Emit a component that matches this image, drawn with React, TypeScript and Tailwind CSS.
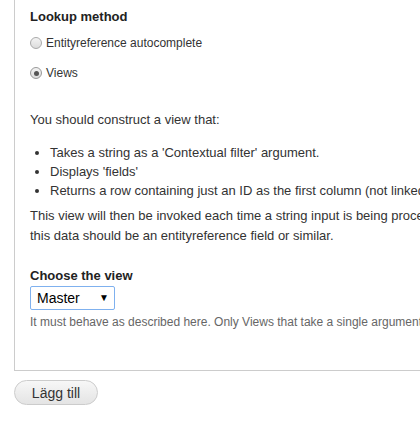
export default function App() {
  return (
    <div className="w-[420px] h-[421px] overflow-hidden bg-white text-[13px] leading-[18px] text-[#333] font-['Liberation_Sans',Arial,sans-serif]">
      <div className="ml-[14px] w-[600px] border-l border-b border-[#ccc] pl-[15px] pt-[8px] pb-[39px]">
        <div className="font-bold text-[#222]">Lookup method</div>
        <div className="mt-[8px] flex items-center gap-[4px] text-[12px]">
          <span className="inline-block w-[12px] h-[12px] rounded-full border border-[#aaa] bg-gradient-to-b from-[#f4f4f4] to-[#dcdcdc]" />
          <span>Entityreference autocomplete</span>
        </div>
        <div className="mt-[12px] flex items-center gap-[4px] text-[12px]">
          <span className="relative inline-flex items-center justify-center w-[12px] h-[12px] rounded-full border border-[#999] bg-gradient-to-b from-[#f4f4f4] to-[#dcdcdc]">
            <span className="w-[5px] h-[5px] rounded-full bg-[#555]" />
          </span>
          <span>Views</span>
        </div>
        <p className="mt-[29px]">You should construct a view that:</p>
        <ul className="mt-[14px] pl-[20px] list-disc leading-[19px]">
          <li>Takes a string as a 'Contextual filter' argument.</li>
          <li>Displays 'fields'</li>
          <li className="whitespace-nowrap">Returns a row containing just an ID as the first column (not linked)</li>
        </ul>
        <p className="mt-[6px] leading-[20px] whitespace-nowrap">
          This view will then be invoked each time a string input is being processed, and the ID it returns will be used. Typically
          <br />
          this data should be an entityreference field or similar.
        </p>
        <div className="mt-[21px] font-bold text-[#222]">Choose the view</div>
        <div className="mt-[1px] w-[85px] h-[24px] border border-[#7fb1ef] rounded-[2px] flex items-center justify-between pl-[6px] pr-[5px] text-[14px] text-black">
          <span>Master</span>
          <span className="text-[10px]">▼</span>
        </div>
        <div className="mt-[3px] text-[12px] text-[#666] whitespace-nowrap">
          It must behave as described here. Only Views that take a single argument are listed.
        </div>
      </div>
      <div className="mt-[9px] ml-[14px] flex">
        <button className="w-[84px] h-[25px] rounded-full border border-[#ccc] bg-gradient-to-b from-[#f7f7f7] to-[#e4e4e4] text-[14px] leading-[18px] text-[#333]">
          Lägg till
        </button>
      </div>
    </div>
  );
}
